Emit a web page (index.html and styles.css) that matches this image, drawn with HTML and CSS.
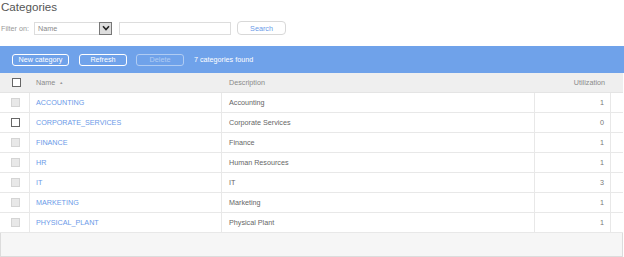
FILE: index.html
```html
<!DOCTYPE html>
<html>
<head>
<meta charset="utf-8">
<link rel="stylesheet" href="styles.css">
</head>
<body>
<div class="page">
  <h1 class="title">Categories</h1>
  <div class="filter">
    <span class="filter-label">Filter on:</span>
    <div class="select">
      <span class="select-text">Name</span>
      <span class="select-arrow"><svg width="8" height="6" viewBox="0 0 8 6"><path d="M1 1.2 L4 4.5 L7 1.2" fill="none" stroke="#222" stroke-width="1.6"/></svg></span>
    </div>
    <div class="text-input"></div>
    <button class="search-btn">Search</button>
  </div>
  <div class="toolbar">
    <button class="tb-btn btn-new">New category</button>
    <button class="tb-btn btn-refresh">Refresh</button>
    <button class="tb-btn btn-delete">Delete</button>
    <span class="found">7 categories found</span>
  </div>
  <div class="grid">
    <div class="row head">
      <div class="cell c-check"><span class="cb cb-head"></span></div>
      <div class="cell c-name">Name <span class="sort">&#9650;</span></div>
      <div class="cell c-desc">Description</div>
      <div class="cell c-util">Utilization</div>
      <div class="cell c-pad"></div>
    </div>
    <div class="row">
      <div class="cell c-check"><span class="cb"></span></div>
      <div class="cell c-name"><a class="link">ACCOUNTING</a></div>
      <div class="cell c-desc">Accounting</div>
      <div class="cell c-util">1</div>
      <div class="cell c-pad"></div>
    </div>
    <div class="row">
      <div class="cell c-check"><span class="cb cb-on"></span></div>
      <div class="cell c-name"><a class="link">CORPORATE_SERVICES</a></div>
      <div class="cell c-desc">Corporate Services</div>
      <div class="cell c-util">0</div>
      <div class="cell c-pad"></div>
    </div>
    <div class="row">
      <div class="cell c-check"><span class="cb"></span></div>
      <div class="cell c-name"><a class="link">FINANCE</a></div>
      <div class="cell c-desc">Finance</div>
      <div class="cell c-util">1</div>
      <div class="cell c-pad"></div>
    </div>
    <div class="row">
      <div class="cell c-check"><span class="cb"></span></div>
      <div class="cell c-name"><a class="link">HR</a></div>
      <div class="cell c-desc">Human Resources</div>
      <div class="cell c-util">1</div>
      <div class="cell c-pad"></div>
    </div>
    <div class="row">
      <div class="cell c-check"><span class="cb"></span></div>
      <div class="cell c-name"><a class="link">IT</a></div>
      <div class="cell c-desc">IT</div>
      <div class="cell c-util">3</div>
      <div class="cell c-pad"></div>
    </div>
    <div class="row">
      <div class="cell c-check"><span class="cb"></span></div>
      <div class="cell c-name"><a class="link">MARKETING</a></div>
      <div class="cell c-desc">Marketing</div>
      <div class="cell c-util">1</div>
      <div class="cell c-pad"></div>
    </div>
    <div class="row">
      <div class="cell c-check"><span class="cb"></span></div>
      <div class="cell c-name"><a class="link">PHYSICAL_PLANT</a></div>
      <div class="cell c-desc">Physical Plant</div>
      <div class="cell c-util">1</div>
      <div class="cell c-pad"></div>
    </div>
    <div class="footer"></div>
  </div>
</div>
</body>
</html>
```
FILE: styles.css
```css
html, body {
  margin: 0;
  padding: 0;
  background: #fff;
}
.page {
  font-family: "Liberation Sans", Arial, sans-serif;
  font-size: 7.2px;
  color: #666;
  width: 624px;
}
.title {
  margin: 0;
  padding-left: 1px;
  font-size: 11.6px;
  font-weight: normal;
  line-height: 14px;
  color: #555;
  height: 21px;
}
.filter {
  display: flex;
  align-items: center;
  height: 14px;
  padding-left: 1px;
}
.filter-label {
  color: #999;
  width: 33px;
}
.select {
  width: 78px;
  height: 13px;
  box-sizing: border-box;
  border: 1px solid #ddd;
  display: flex;
  align-items: stretch;
}
.select-text {
  flex: 1;
  padding-left: 3px;
  color: #888;
  line-height: 11px;
}
.select-arrow {
  width: 11px;
  background: #ddd;
  border: 1px solid #777;
  margin: -1px -1px -1px 0;
  display: flex;
  align-items: center;
  justify-content: center;
}
.text-input {
  width: 112px;
  height: 13px;
  box-sizing: border-box;
  border: 1px solid #ddd;
  margin-left: 7px;
}
.search-btn {
  margin-left: 6px;
  width: 49px;
  height: 14px;
  box-sizing: border-box;
  border: 1px solid #d8d8d8;
  border-radius: 4px;
  background: #fff;
  color: #6b9ae8;
  font-family: "Liberation Sans", Arial, sans-serif;
  font-size: 7.2px;
  padding: 0;
}
.toolbar {
  margin-top: 11px;
  height: 27px;
  background: #6fa2ea;
  display: flex;
  align-items: center;
  padding-left: 12px;
}
.tb-btn {
  height: 12px;
  box-sizing: border-box;
  border: 1px solid #fff;
  border-radius: 3px;
  background: transparent;
  color: #fff;
  font-family: "Liberation Sans", Arial, sans-serif;
  font-size: 7.2px;
  padding: 0;
  margin-right: 9px;
}
.btn-new { width: 57px; margin-right: 10px; }
.btn-refresh { width: 48px; }
.btn-delete {
  width: 48px;
  opacity: 0.45;
  margin-right: 10px;
}
.found {
  color: #fff;
}
.grid {
  width: 623px;
}
.row {
  display: grid;
  grid-template-columns: 30px 192px 313px 76px 1fr;
  height: 20px;
  box-sizing: border-box;
  border-bottom: 1px solid #e8e8e8;
}
.row.head {
  background: #efefef;
  border-bottom: 1px solid #e4e4e4;
  color: #8a8a8a;
}
.cell {
  display: flex;
  align-items: center;
  box-sizing: border-box;
  border-right: 1px solid #e8e8e8;
  white-space: nowrap;
}
.head .cell {
  border-right: none;
}
.c-check {
  justify-content: center;
  padding-left: 3px;
}
.row:not(.head) .c-check {
  padding-left: 2px;
}
.c-name {
  padding-left: 6px;
}
.c-desc {
  padding-left: 7px;
}
.c-util {
  justify-content: flex-end;
  padding-right: 6px;
  color: #777;
}
.head .c-util {
  color: #8a8a8a;
}
.c-pad {
  border-right: none;
}
.sort {
  font-size: 4px;
  margin-left: 4px;
  color: #999;
}
.link {
  color: #6b9ae8;
}
.cb {
  width: 9px;
  height: 9px;
  box-sizing: border-box;
  border: 1px solid #d4d4d4;
  background: #e8e8e8;
}
.cb-head,
.cb-on {
  border: 1px solid #666;
  background: #fff;
}
.footer {
  height: 24px;
  box-sizing: border-box;
  background: #f6f6f6;
  border: 1px solid #dcdcdc;
  border-top: none;
}
```
